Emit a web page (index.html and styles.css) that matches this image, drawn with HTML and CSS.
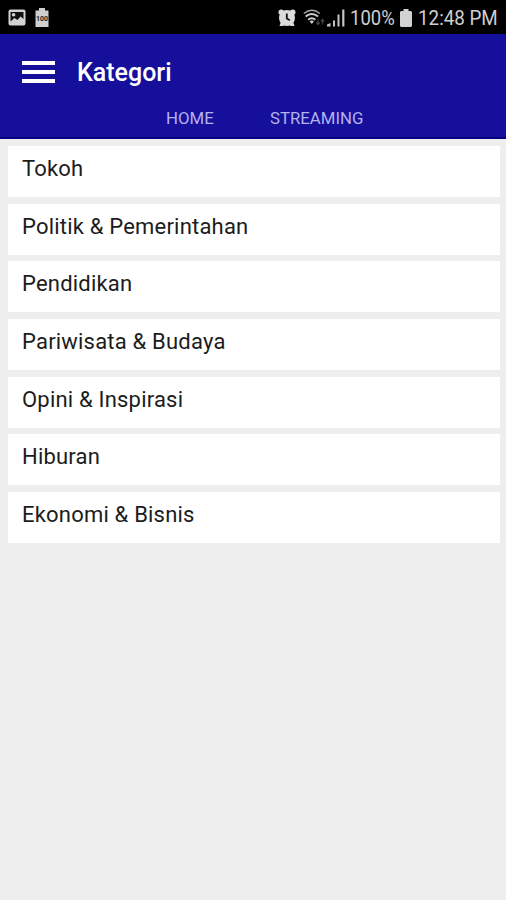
FILE: index.html
```html
<!DOCTYPE html>
<html lang="id">
<head>
	<title>Kategori</title>
	<meta charset="utf-8">
	<meta name="viewport" content="width=device-width,initial-scale=1">
	<link rel="stylesheet" href="styles.css">
</head>
<body>
	<div class="status">
		<svg class="ic-pic" width="18" height="17" viewBox="0 0 18 17">
			<rect x="0.5" y="0.5" width="17" height="16" rx="2" fill="#d2d2d2"/>
			<path d="M2.500 3h13v7l-3-2.500-3 3.500-3-2-4 3.500z" fill="#111"/>
			<circle cx="5.600" cy="5.800" r="1.800" fill="#d2d2d2"/>
		</svg>
		<svg class="ic-full" width="14" height="19" viewBox="0 0 14 19">
			<path d="M4 0h6v2.500h3.500V19H0.500V2.500H4z" fill="#cfcfcf"/>
			<text x="7" y="13" text-anchor="middle" class="tiny">100</text>
		</svg>
		<svg class="ic-alarm" width="18" height="18" viewBox="0 0 18 18">
			<g fill="#dcdcdc">
				<circle cx="9" cy="9" r="8"/>
				<circle cx="3.300" cy="3.300" r="2.800"/>
				<circle cx="14.700" cy="3.300" r="2.800"/>
				<path d="M1.500 17l2-6 5 4-3.500 2zM16.500 17l-2-6-5 4 3.500 2z"/>
			</g>
			<path d="M8.800 4.500v5l3 1.800" fill="none" stroke="#111" stroke-width="1.800"/>
		</svg>
		<svg class="ic-wifi" width="22" height="18" viewBox="0 0 22 18">
			<g fill="none" stroke="#d0d0d0">
				<path d="M0.800 4.500q8-6.500 16 0" stroke-width="1.400" stroke="#a8a8a8"/>
				<path d="M2.600 7.600q6.200-5.200 12.400 0" stroke-width="1.900"/>
				<path d="M5.200 10.800q3.600-3 7.200 0" stroke-width="1.900"/>
			</g>
			<path d="M6.600 12.200q2.200-1.400 4.400 0L8.800 15z" fill="#d0d0d0"/>
			<path d="M15 10.500v5m-1.700-2l1.700 2 1.700-2M19.500 15.500v-5m-1.700 2l1.700-2 1.700 2" fill="none" stroke="#444" stroke-width="1.200"/>
		</svg>
		<svg class="ic-signal" width="18" height="18" viewBox="0 0 18 18">
			<path d="M0 17.500v-2l3.500-1.500v3.500zM6 17.500v-6h2v6zM10.500 17.500V5.500h2v12zM15.200 17.500V0.500h2.200v17z" fill="#c4c4c4"/>
		</svg>
		<span class="percent">100%</span>
		<svg class="ic-batt" width="12" height="18" viewBox="0 0 12 18">
			<path d="M3.500 0h5v2H11l1 1v14l-1 1H1l-1-1V3l1-1h2.500z" fill="#d2d2d2"/>
		</svg>
		<span class="clock">12:48 PM</span>
	</div>

	<div class="header">
		<div class="title">
			<div class="menu"><i></i><i></i><i></i></div>
			<h1>Kategori</h1>
		</div>
		<div class="tabs">
			<a class="home">HOME</a>
			<a class="streaming">STREAMING</a>
		</div>
	</div>

	<ul class="list">
		<li>Tokoh</li>
		<li>Politik &amp; Pemerintahan</li>
		<li>Pendidikan</li>
		<li>Pariwisata &amp; Budaya</li>
		<li>Opini &amp; Inspirasi</li>
		<li>Hiburan</li>
		<li>Ekonomi &amp; Bisnis</li>
	</ul>
</body>
</html>
```
FILE: styles.css
```css
*{margin: 0;padding: 0;box-sizing: border-box;}
html,body{width: 100%;height: 100%}
body{background-color: #eee;font-family: Roboto,"Liberation Sans",sans-serif;overflow: hidden;}
ul li{list-style: none;}

/* status bar */
.status{height: 34px;background-color: #000;color: #cfcfcf;display: flex;align-items: flex-start;}
.status svg{flex: none;display: block;}
.ic-pic{margin: 9px 0 0 8px;}
.ic-full{margin: 8px 0 0 9px;}
.ic-alarm{margin: 9px 0 0 229px;}
.ic-wifi{margin: 9px 0 0 7px;}
.ic-signal{margin: 9px 0 0 2px;}
.tiny{font-size: 7px;font-weight: bold;fill: #222;}
.percent,.clock{font-size: 21px;line-height: 36px;height: 34px;white-space: nowrap;transform-origin: 0 0;}
.percent{width: 44px;margin-left: 5px;transform: scaleX(.88);}
.clock{width: 80px;margin-left: 6px;transform: scaleX(.895);}
.ic-batt{margin: 9px 0 0 6px;}

/* header */
.header{height: 105px;background-color: #160f9c;border-bottom: 2px solid #050080;}
.title{display: flex;height: 70px;padding: 0 0 0 22px;}
.menu{width: 33px;padding-top: 27px;}
.menu i{display: block;height: 4px;margin-bottom: 5px;background-color: #fff;}
.title h1{margin-left: 22px;font-size: 25px;line-height: 77px;font-weight: 500;color: #fff;}
.tabs{display: flex;padding-left: 166px;color: #b4b1ec;font-size: 16.800px;line-height: 29px;}
.home{width: 104px;}

/* category list */
.list{padding: 7px 6px 0 8px;}
.list li{height: 51px;margin-bottom: 6.700px;padding-left: 14px;background-color: #fff;color: #1c1c1c;font-size: 22px;line-height: 45px;letter-spacing: .2px;}
```
